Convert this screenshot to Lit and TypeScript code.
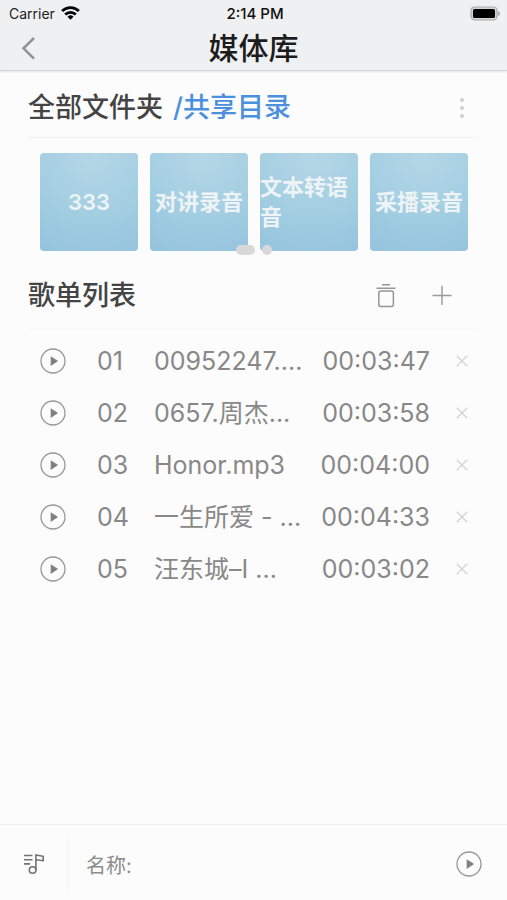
import { LitElement, html, css } from "lit";
import { customElement, property } from "lit/decorators.js";

interface Track {
  name: string;
  duration: string;
}

const folders = ["333", "对讲录音", "文本转语音", "采播录音"];

const tracks: Track[] = [
  { name: "00952247....", duration: "00:03:47" },
  { name: "0657.周杰...", duration: "00:03:58" },
  { name: "Honor.mp3", duration: "00:04:00" },
  { name: "一生所爱 - ...", duration: "00:04:33" },
  { name: "汪东城–I ...", duration: "00:03:02" },
];

const resetButton = css`
  button {
    appearance: none;
    border: 0;
    padding: 0;
    margin: 0;
    background: none;
    color: inherit;
    font: inherit;
    cursor: pointer;
  }
  svg {
    display: block;
  }
`;

const playIcon = html`
  <svg width="26" height="26" viewBox="0 0 26 26" aria-hidden="true">
    <circle cx="13" cy="13" r="12" fill="none" stroke="#989898" stroke-width="1.3" />
    <path d="M10.7 8.2v9.8l7.4-4.9z" fill="#808080" />
  </svg>
`;

@customElement("status-bar")
export class StatusBar extends LitElement {
  static styles = css`
    :host {
      display: grid;
      grid-template-columns: 1fr auto 1fr;
      align-items: center;
      height: 26px;
      padding: 0 6px 0 9px;
      font-size: 14px;
      color: #222;
    }
    .carrier {
      display: flex;
      align-items: center;
      gap: 6px;
    }
    .time {
      font-size: 15px;
      font-weight: 500;
      color: #111;
    }
    .battery {
      justify-self: end;
    }
    svg {
      display: block;
    }
  `;

  render() {
    return html`
      <span class="carrier">
        Carrier
        <svg width="19" height="14" viewBox="0 0 19 14" aria-label="Wi-Fi">
          <g fill="none" stroke="#000" stroke-width="2.8">
            <path d="M1.1 5.1a12 12 0 0 1 16.8 0" />
            <path d="M4.2 8.5a7.6 7.6 0 0 1 10.6 0" />
          </g>
          <path d="M6.5 10.7a4.3 4.3 0 0 1 6 0l-3 3z" fill="#000" />
        </svg>
      </span>
      <span class="time">2:14 PM</span>
      <svg class="battery" width="31" height="15" viewBox="0 0 31 15" aria-label="Battery">
        <rect x="1" y="1" width="26" height="13" rx="3.6" fill="#d6d6d6" stroke="#a9a9a9" stroke-width="1.2" />
        <rect x="3" y="3" width="22" height="9" rx="1.6" fill="#000" />
        <path d="M28 5c2.6.8 2.6 4.2 0 5z" fill="#a9a9a9" />
      </svg>
    `;
  }
}

@customElement("folder-grid")
export class FolderGrid extends LitElement {
  @property({ attribute: false }) items: string[] = [];

  static styles = [
    resetButton,
    css`
      :host {
        display: block;
        position: relative;
        padding: 15px 11px 0 12px;
      }
      .tiles {
        display: grid;
        grid-template-columns: repeat(4, 1fr);
        gap: 12px;
      }
      button.tile {
        aspect-ratio: 1;
        display: flex;
        align-items: center;
        justify-content: center;
        border-radius: 4px;
        background: radial-gradient(circle at 55% 0%, #b5d7e6 0%, #a3cee2 55%, #94c3dd 100%);
        color: #eef3f6;
        font-size: 22px;
        font-weight: 600;
        line-height: 30px;
        text-align: left;
      }
      .dots {
        position: absolute;
        left: 0;
        right: 0;
        bottom: -4px;
        display: flex;
        justify-content: center;
        gap: 7px;
      }
      .dot {
        width: 10px;
        height: 10px;
        border-radius: 5px;
        background: #d8d8d8;
      }
      .dot.active {
        width: 19px;
      }
    `,
  ];

  render() {
    return html`
      <div class="tiles">
        ${this.items.map((name) => html`<button class="tile">${name}</button>`)}
      </div>
      <div class="dots"><span class="dot active"></span><span class="dot"></span></div>
    `;
  }
}

@customElement("track-list")
export class TrackList extends LitElement {
  @property({ attribute: false }) items: Track[] = [];

  static styles = [
    resetButton,
    css`
      :host {
        display: block;
      }
      .list {
        list-style: none;
        margin: 0;
        padding: 5px 11px 0 12px;
        font-size: 25px;
        line-height: 32px;
        color: #888;
      }
      .row {
        display: grid;
        grid-template-columns: 57px 57px 1fr auto 38px;
        align-items: center;
        height: 52px;
      }
      .name {
        height: 32px;
        white-space: nowrap;
        overflow: hidden;
      }
      .remove {
        justify-self: end;
      }
    `,
  ];

  render() {
    return html`
      <ol class="list">
        ${this.items.map(
          (track, i) => html`
            <li class="row">
              <button aria-label="播放">${playIcon}</button>
              <span>${String(i + 1).padStart(2, "0")}</span>
              <span class="name">${track.name}</span>
              <span>${track.duration}</span>
              <button class="remove" aria-label="移除">
                <svg width="12" height="12" viewBox="0 0 12 12" aria-hidden="true">
                  <path d="M.8.8l10.4 10.4M11.2.8L.8 11.2" fill="none" stroke="#d4d4d4" stroke-width="1.3" />
                </svg>
              </button>
            </li>
          `,
        )}
      </ol>
    `;
  }
}

@customElement("app-root")
export class AppRoot extends LitElement {
  static styles = [
    resetButton,
    css`
      :host {
        display: flex;
        flex-direction: column;
        min-height: 100vh;
        background: #fcfcfc;
        font-family: Inter, "Noto Sans CJK SC", sans-serif;
      }
      .header {
        background: #eff0f2;
        border-bottom: 1px solid #d4d5d6;
        box-shadow: 0 1px 2px rgba(0, 0, 0, 0.1);
      }
      .nav {
        display: grid;
        grid-template-columns: 1fr auto 1fr;
        align-items: center;
        height: 44px;
        padding: 0 20px;
      }
      .nav button {
        justify-self: start;
      }
      h1,
      h2 {
        margin: 0;
        font-weight: 500;
      }
      h1 {
        font-size: 30px;
        line-height: 44px;
        color: #1c1c1e;
      }
      h2 {
        font-size: 27px;
        line-height: 40px;
        color: #444;
      }
      main {
        flex: 1;
        padding: 0 28px;
      }
      .bar {
        display: flex;
        align-items: center;
        box-sizing: border-box;
        border-bottom: 1px solid #f3f3f3;
      }
      .path {
        height: 67px;
        padding-top: 7px;
        gap: 10px;
      }
      .path a {
        color: #4a90dc;
        text-decoration: none;
      }
      .more {
        margin-left: auto;
        padding: 0 15px;
      }
      .songs {
        height: 79px;
        padding-top: 12px;
        border-bottom-color: #f7f7f7;
      }
      .actions {
        display: flex;
        gap: 34px;
        margin-left: auto;
        padding-right: 26px;
      }
      .player {
        display: flex;
        align-items: center;
        box-sizing: border-box;
        height: 76px;
        padding: 3px 25px 0 0;
        border-top: 1px solid #efefef;
      }
      .queue {
        display: flex;
        align-items: center;
        justify-content: center;
        width: 68px;
        height: 56px;
        border-right: 1px solid #f4f4f4;
      }
      .now {
        flex: 1;
        padding-left: 18px;
        font-size: 20px;
        color: #8c8c8c;
      }
    `,
  ];

  render() {
    return html`
      <header class="header">
        <status-bar></status-bar>
        <div class="nav">
          <button aria-label="返回">
            <svg width="16" height="24" viewBox="0 0 16 24" aria-hidden="true">
              <path d="M14 2L3.5 12.3L14 22.6" fill="none" stroke="#929292" stroke-width="2.5" />
            </svg>
          </button>
          <h1>媒体库</h1>
        </div>
      </header>
      <main>
        <div class="bar path">
          <h2>全部文件夹</h2>
          <h2><a href="#shared">/共享目录</a></h2>
          <button class="more" aria-label="更多">
            <svg width="4" height="22" viewBox="0 0 4 22" aria-hidden="true">
              <g fill="#d0d0d0">
                <circle cx="2" cy="3" r="2" />
                <circle cx="2" cy="11" r="2" />
                <circle cx="2" cy="19" r="2" />
              </g>
            </svg>
          </button>
        </div>
        <folder-grid .items=${folders}></folder-grid>
        <div class="bar songs">
          <h2>歌单列表</h2>
          <div class="actions">
            <button aria-label="清空">
              <svg width="22" height="26" viewBox="0 0 22 26" aria-hidden="true">
                <g fill="none" stroke="#959595" stroke-width="1.5">
                  <path d="M7 1.8h8M1.5 5.2h19" />
                  <rect x="3.8" y="8" width="14.6" height="15.6" rx="2" />
                </g>
              </svg>
            </button>
            <button aria-label="添加">
              <svg width="22" height="26" viewBox="0 0 22 26" aria-hidden="true">
                <path d="M1.5 12.5h19M11 3v19" fill="none" stroke="#999" stroke-width="1.4" />
              </svg>
            </button>
          </div>
        </div>
        <track-list .items=${tracks}></track-list>
      </main>
      <footer class="player">
        <button class="queue" aria-label="播放列表">
          <svg width="22" height="22" viewBox="0 0 22 22" aria-hidden="true">
            <g fill="none" stroke="#727272" stroke-width="1.6">
              <path d="M1 2.5h8.5M1 6.7h8.5M1 10.9h6" />
              <circle cx="9.6" cy="17" r="3.300" />
              <path d="M12.9 17V1.9l7.3 1.4v4.4l-7.300-1" />
            </g>
          </svg>
        </button>
        <span class="now">名称:</span>
        <button aria-label="播放">${playIcon}</button>
      </footer>
    `;
  }
}
